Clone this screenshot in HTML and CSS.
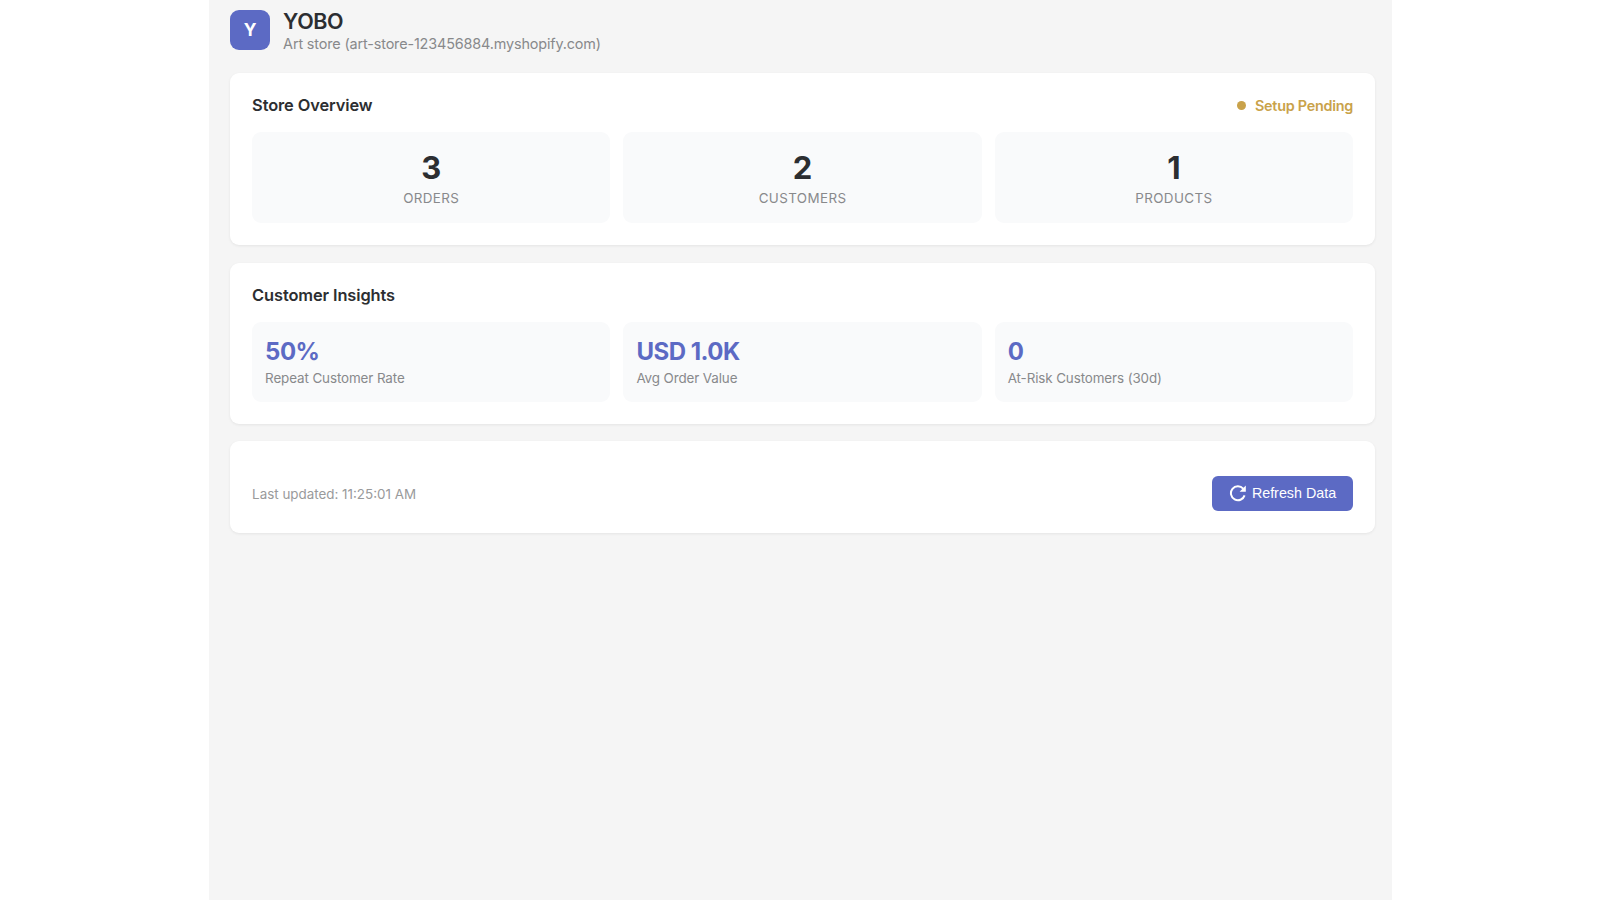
FILE: index.html
```html
<!DOCTYPE html>
<html lang="en">
<head>
    <meta charset="UTF-8">
    <title>YOBO</title>
    <link rel="stylesheet" href="styles.css">
</head>
<body>
    <div class="app">
        <header class="header">
            <div class="logo">Y</div>
            <div>
                <h1>YOBO</h1>
                <p class="store-name">Art store (art-store-123456884.myshopify.com)</p>
            </div>
        </header>

        <section class="card overview">
            <div class="card-header">
                <h2>Store Overview</h2>
                <div class="status"><i class="dot"></i><span>Setup Pending</span></div>
            </div>
            <div class="grid">
                <div class="stat">
                    <div class="stat-value">3</div>
                    <div class="stat-label">Orders</div>
                </div>
                <div class="stat">
                    <div class="stat-value">2</div>
                    <div class="stat-label">Customers</div>
                </div>
                <div class="stat">
                    <div class="stat-value">1</div>
                    <div class="stat-label">Products</div>
                </div>
            </div>
        </section>

        <section class="card insights">
            <div class="card-header">
                <h2>Customer Insights</h2>
            </div>
            <div class="grid">
                <div class="insight">
                    <div class="insight-value">50%</div>
                    <div class="insight-label">Repeat Customer Rate</div>
                </div>
                <div class="insight">
                    <div class="insight-value">USD 1.0K</div>
                    <div class="insight-label">Avg Order Value</div>
                </div>
                <div class="insight">
                    <div class="insight-value">0</div>
                    <div class="insight-label">At-Risk Customers (30d)</div>
                </div>
            </div>
        </section>

        <section class="card footer">
            <span class="updated">Last updated: 11:25:01 AM</span>
            <button class="refresh">
                <svg width="18" height="18" viewBox="0 0 18 18" fill="none" stroke="currentColor" stroke-width="2">
                    <path d="M14.2 4.6A7 7 0 1 0 15.6 11.4"/>
                    <path d="M16.8 1.6V7.8H10.6Z" fill="currentColor" stroke="none"/>
                </svg>
                <span>Refresh Data</span>
            </button>
        </section>
    </div>
</body>
</html>
```
FILE: styles.css
```css
* {
    box-sizing: border-box;
    margin: 0;
    padding: 0;
}
body {
    background-color: #ffffff;
    font-family: Inter, sans-serif;
    color: #2c2e31;
}
.app {
    width: 1183px;
    height: 900px;
    margin-left: 208.5px;
    padding: 9.5px 16.5px 0 21.6px;
    background-color: #f5f5f5;
    overflow: hidden;
}
.header {
    display: flex;
    gap: 13px;
    height: 63.5px;
}
.logo {
    width: 40px;
    height: 40px;
    border-radius: 9px;
    background-color: #5c6ac4;
    color: #ffffff;
    font-size: 17.5px;
    font-weight: 700;
    line-height: 40px;
    text-align: center;
}
h1 {
    font-size: 21.5px;
    font-weight: 600;
    line-height: 22px;
    letter-spacing: -0.4px;
}
.store-name {
    font-size: 14.4px;
    line-height: 24px;
    letter-spacing: -0.14px;
    color: #88898b;
}
.card {
    padding: 22px;
    margin-bottom: 17.5px;
    background-color: #ffffff;
    border-radius: 9px;
    box-shadow: 0 1px 3px rgba(0, 0, 0, 0.07);
}
.overview {
    height: 172px;
}
.insights {
    height: 161px;
}
.card-header {
    display: flex;
    justify-content: space-between;
    align-items: center;
    height: 20px;
    margin-bottom: 17px;
}
h2 {
    font-size: 16.4px;
    font-weight: 600;
    letter-spacing: -0.1px;
}
.status {
    display: flex;
    align-items: center;
    gap: 9px;
    color: #c9a24a;
    font-size: 14.4px;
    font-weight: 600;
    letter-spacing: -0.26px;
}
.dot {
    width: 9px;
    height: 9px;
    border-radius: 50%;
    background-color: #c9a24a;
}
.grid {
    display: grid;
    grid-template-columns: repeat(3, 1fr);
    gap: 13px;
}
.stat, .insight {
    background-color: #f9fafb;
    border-radius: 9px;
}
.stat {
    height: 91px;
    padding-top: 18px;
    text-align: center;
}
.stat-value {
    font-size: 31px;
    font-weight: 700;
    line-height: 36px;
}
.stat-label {
    font-size: 13.4px;
    line-height: 24px;
    letter-spacing: 0.4px;
    text-transform: uppercase;
    color: #88898b;
}
.insight {
    height: 80px;
    padding: 15px 13px;
}
.insight-value {
    font-size: 24px;
    font-weight: 700;
    line-height: 30px;
    letter-spacing: -0.5px;
    color: #5c6ac4;
}
.insight-label {
    font-size: 13.4px;
    line-height: 23px;
    letter-spacing: -0.1px;
    color: #88898b;
}
.footer {
    display: flex;
    justify-content: space-between;
    align-items: center;
    height: 91.5px;
    padding-top: 35px;
}
.updated {
    padding-top: 2px;
    font-size: 13.4px;
    color: #999a9b;
}
.refresh {
    display: flex;
    align-items: center;
    justify-content: center;
    gap: 5px;
    width: 141px;
    height: 35px;
    border: none;
    border-radius: 6px;
    background-color: #5c6ac4;
    color: #ffffff;
    font-family: "Liberation Sans", Arial, sans-serif;
    font-size: 14.3px;
    cursor: pointer;
}
```
